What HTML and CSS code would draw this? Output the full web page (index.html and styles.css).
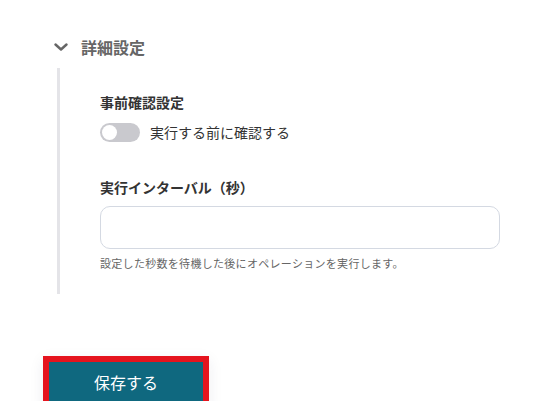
FILE: index.html
```html
<!DOCTYPE html>
<html lang="ja">
<head>
<meta charset="utf-8">
<link rel="stylesheet" href="styles.css">
</head>
<body>
<div class="page">
  <div class="acc-head">
    <svg class="chev" width="14" height="8" viewBox="0 0 14 8"><path d="M1.5 1.5 L7 6.5 L12.5 1.5" fill="none" stroke="#666" stroke-width="2.4" stroke-linecap="round" stroke-linejoin="round"/></svg>
    <span class="acc-title">詳細設定</span>
  </div>
  <div class="acc-body">
    <div class="field-label">事前確認設定</div>
    <div class="toggle-row">
      <span class="toggle"><span class="knob"></span></span>
      <span class="toggle-text">実行する前に確認する</span>
    </div>
    <div class="field-label second">実行インターバル（秒）</div>
    <div class="input"></div>
    <div class="help">設定した秒数を待機した後にオペレーションを実行します。</div>
  </div>
  <div class="actions">
    <button class="save">保存する</button>
  </div>
</div>
</body>
</html>
```
FILE: styles.css
```css
html, body {
  margin: 0;
  padding: 0;
  background: #ffffff;
}
body {
  font-family: "Noto Sans CJK JP", "Noto Sans", sans-serif;
  color: #333;
}
.page {
  padding: 35px 0 0 0;
}
.acc-head {
  display: flex;
  align-items: center;
  height: 24px;
  padding-left: 54px;
}
.chev {
  display: block;
  margin-right: 13px;
}
.acc-title {
  font-size: 16px;
  font-weight: 700;
  color: #666;
  line-height: 24px;
}
.acc-body {
  margin: 9px 0 0 57px;
  border-left: 3px solid #e4e4e8;
  padding: 24px 59px 23px 40px;
}
.field-label {
  font-size: 14px;
  font-weight: 700;
  color: #333;
  line-height: 20px;
}
.field-label.second {
  margin-top: 35px;
}
.toggle-row {
  display: flex;
  align-items: center;
  margin-top: 10px;
  height: 20px;
}
.toggle {
  width: 40px;
  height: 19px;
  border-radius: 10px;
  background: #c9c9ce;
  position: relative;
  display: block;
}
.knob {
  position: absolute;
  left: 2px;
  top: 2px;
  width: 15px;
  height: 15px;
  border-radius: 50%;
  background: #fff;
}
.toggle-text {
  margin-left: 10px;
  font-size: 14px;
  color: #333;
  line-height: 20px;
}
.input {
  margin-top: 9px;
  height: 41px;
  border: 1px solid #d4d9e2;
  border-radius: 10px;
  background: #fff;
}
.help {
  margin-top: 6px;
  font-size: 11px;
  line-height: 16px;
  color: #666;
  letter-spacing: 0.3px;
}
.actions {
  padding: 68px 0 0 49px;
}
.save {
  display: block;
  width: 154px;
  height: 39px;
  background: #0f687f;
  color: #fff;
  border: none;
  font-family: "Noto Sans CJK JP", sans-serif;
  font-size: 16px;
  outline: 6px solid #e5141e;
  box-shadow: 0 4px 14px 6px rgba(40, 40, 80, 0.08);
  padding: 0;
}
```
